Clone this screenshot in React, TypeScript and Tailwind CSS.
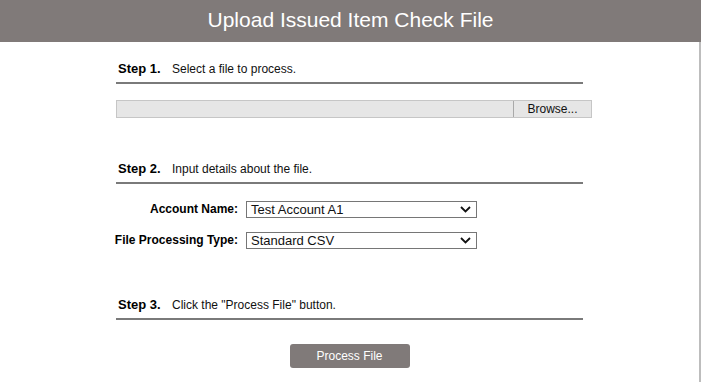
import * as React from 'react';

function StepHeading({num, text}: {num: string; text: string}) {
    return (
        <div className="flex items-baseline h-[29px] pt-[4px] pl-[2px] border-b-2 border-[#7a7a7a]">
            <span className="w-[54px] text-[13px] font-bold text-black">{num}</span>
            <span className="text-[12px] text-[#111]">{text}</span>
        </div>
    );
}

function Select({value}: {value: string}) {
    return (
        <div className="flex items-center justify-between w-[231px] h-[17px] border border-[#767676] bg-white pl-[4px] pr-[5px]">
            <span className="text-[13px] leading-none text-[#111]">{value}</span>
            <svg width="11" height="7" viewBox="0 0 11 7">
                <path d="M1 1l4.5 4.5L10 1" fill="none" stroke="#111" strokeWidth="1.8" />
            </svg>
        </div>
    );
}

function Field({label, value}: {label: string; value: string}) {
    return (
        <div className="flex items-center gap-[8px]">
            <div className="w-[122px] flex justify-end">
                <span className="whitespace-nowrap text-[12px] font-bold text-black">{label}</span>
            </div>
            <Select value={value} />
        </div>
    );
}

export default function App() {
    return (
        <div className="relative w-[701px] h-[382px] bg-white font-['Liberation_Sans',Arial,sans-serif] overflow-hidden">
            <div className="h-[42px] bg-[#807a79] flex items-center justify-center">
                <h1 className="text-[21px] text-white -mt-[3px]">Upload Issued Item Check File</h1>
            </div>
            <div className="absolute right-0 top-[42px] bottom-0 w-[2px] bg-[#bdbdbd]" />

            <div className="ml-[116px] w-[467px] pt-[13px]">
                <StepHeading num="Step 1." text="Select a file to process." />
                <div className="flex mt-[16px] h-[18px] w-[476px] border border-[#c6c6c6] bg-[#e6e6e6]">
                    <div className="flex-1" />
                    <div className="w-[78px] border-l border-[#a9a9a9] flex items-center justify-center text-[12px] text-[#111]">
                        Browse...
                    </div>
                </div>

                <div className="mt-[37px]">
                    <StepHeading num="Step 2." text="Input details about the file." />
                </div>
                <div className="flex flex-col gap-[13px] mt-[16px]">
                    <Field label="Account Name:" value="Test Account A1" />
                    <Field label="File Processing Type:" value="Standard CSV" />
                </div>

                <div className="mt-[42px]">
                    <StepHeading num="Step 3." text={'Click the "Process File" button.'} />
                </div>
                <div className="flex justify-center mt-[24px]">
                    <button className="w-[120px] h-[24px] rounded-[3px] bg-[#807a79] text-white text-[12px]">
                        Process File
                    </button>
                </div>
            </div>
        </div>
    );
}
